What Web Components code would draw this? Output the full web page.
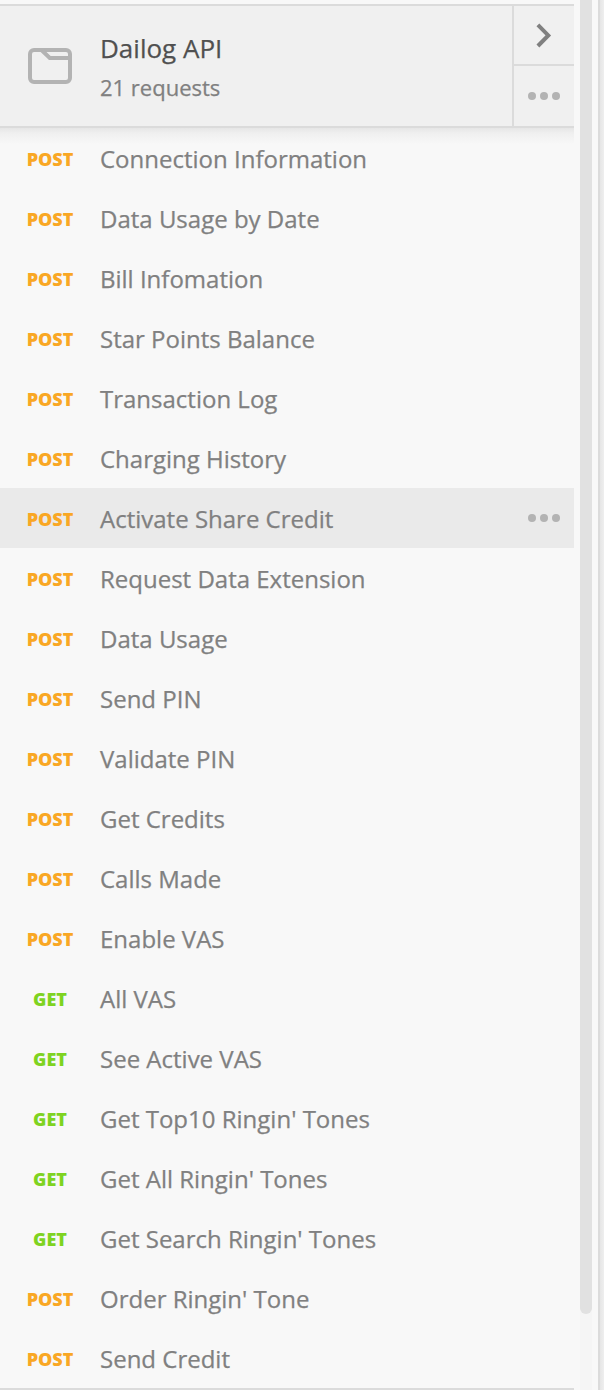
<!DOCTYPE html>
<html lang="en">
<head>
<meta charset="utf-8">
<title>Collections</title>
<style>
html, body { margin: 0; height: 100%; overflow: hidden; background: #f8f8f8; }
body { font-family: "Open Sans", "Noto Sans", sans-serif; color: #808080; }
</style>
</head>
<body>
<api-sidebar>
  <collection-header name="Dailog API" count="21 requests"></collection-header>
  <request-row method="POST">Connection Information</request-row>
  <request-row method="POST">Data Usage by Date</request-row>
  <request-row method="POST">Bill Infomation</request-row>
  <request-row method="POST">Star Points Balance</request-row>
  <request-row method="POST">Transaction Log</request-row>
  <request-row method="POST">Charging History</request-row>
  <request-row method="POST" active>Activate Share Credit</request-row>
  <request-row method="POST">Request Data Extension</request-row>
  <request-row method="POST">Data Usage</request-row>
  <request-row method="POST">Send PIN</request-row>
  <request-row method="POST">Validate PIN</request-row>
  <request-row method="POST">Get Credits</request-row>
  <request-row method="POST">Calls Made</request-row>
  <request-row method="POST">Enable VAS</request-row>
  <request-row method="GET">All VAS</request-row>
  <request-row method="GET">See Active VAS</request-row>
  <request-row method="GET">Get Top10 Ringin' Tones</request-row>
  <request-row method="GET">Get All Ringin' Tones</request-row>
  <request-row method="GET">Get Search Ringin' Tones</request-row>
  <request-row method="POST">Order Ringin' Tone</request-row>
  <request-row method="POST">Send Credit</request-row>
</api-sidebar>
<script>
const attach = (el, html) => { el.attachShadow({ mode: "open" }).innerHTML = html; };

class MoreDots extends HTMLElement {
  connectedCallback() {
    if (this.shadowRoot) return;
    attach(this, `
      <style>:host { display: block; width: 32px; height: 8px; } svg { display: block; }</style>
      <svg width="32" height="8" fill="#b3b3b3"><circle cx="4" cy="4" r="4"/><circle cx="16" cy="4" r="4"/><circle cx="28" cy="4" r="4"/></svg>`);
  }
}

class CollectionHeader extends HTMLElement {
  connectedCallback() {
    if (this.shadowRoot) return;
    attach(this, `
      <style>
        :host { display: flex; box-sizing: border-box; height: 124px; flex: none; background: #f0f0f0;
          border-top: 2px solid #dbdbdb; border-bottom: 2px solid #dbdbdb; }
        .folder { display: block; flex: none; width: 44px; height: 36px; margin: 42px 28px 0; }
        .info { flex: 1; padding-top: 24px; white-space: nowrap; -webkit-text-stroke: 0.25px; }
        .name { font-size: 26px; line-height: 36px; color: #505050; }
        .count { font-size: 22px; line-height: 30px; margin-top: 6px; }
        .actions { width: 60px; display: flex; flex-direction: column; border-left: 2px solid #dbdbdb; }
        .open, .more { display: flex; justify-content: center; box-sizing: border-box; }
        .open { height: 60px; border-bottom: 2px solid #dbdbdb; padding-top: 17px; }
        .more { height: 60px; padding-top: 26px; }
      </style>
      <svg class="folder" viewBox="0 0 44 36" fill="none" stroke="#b3b3b3" stroke-width="4">
        <rect x="2" y="2" width="40" height="32" rx="4"/>
        <path d="M14 2.5 L21.8 10 H42"/>
      </svg>
      <div class="info"><div class="name"></div><div class="count"></div></div>
      <div class="actions">
        <div class="open"><svg width="16" height="25" fill="none" stroke="#808080" stroke-width="4"><path d="M1.9 1.8 L12.3 12.4 L1.9 23"/></svg></div>
        <div class="more"><more-dots></more-dots></div>
      </div>`);
    this.shadowRoot.querySelector(".name").textContent = this.getAttribute("name");
    this.shadowRoot.querySelector(".count").textContent = this.getAttribute("count");
  }
}

class RequestRow extends HTMLElement {
  connectedCallback() {
    if (this.shadowRoot) return;
    const method = this.getAttribute("method");
    attach(this, `
      <style>
        :host { display: flex; align-items: center; flex: none; height: 60px; box-sizing: border-box; padding-right: 14px; }
        :host([active]) { background: #eaeaea; }
        .method { width: 100px; text-align: center; font-size: 18px; font-weight: 800; line-height: 24px; color: #f9a724; padding-top: 2px; }
        .method.get { color: #7ed321; }
        .label { flex: 1; font-size: 24px; line-height: 34px; padding-top: 2px; white-space: nowrap; -webkit-text-stroke: 0.25px; }
      </style>
      <span class="method ${method.toLowerCase()}">${method}</span>
      <span class="label"><slot></slot></span>
      ${this.hasAttribute("active") ? "<more-dots></more-dots>" : ""}`);
  }
}

class ScrollTrack extends HTMLElement {
  connectedCallback() {
    if (this.shadowRoot) return;
    attach(this, `
      <style>
        :host { display: block; width: 12px; background: #f5f5f5; }
        .thumb { height: 1314px; background: #e1e1e1; border-radius: 0 0 6px 6px; }
      </style>
      <div class="thumb"></div>`);
  }
}

class ApiSidebar extends HTMLElement {
  connectedCallback() {
    if (this.shadowRoot) return;
    attach(this, `
      <style>
        :host { display: flex; width: 604px; height: 1390px; background: #f8f8f8; overflow: hidden; }
        .list { display: flex; flex-direction: column; width: 574px; box-sizing: border-box; padding-top: 4px;
          border-bottom: 2px solid #dbdbdb; margin-right: 6px; }
        .rows { display: flex; flex-direction: column;
          background: linear-gradient(#e6e6e6, #efefef 5px, #f8f8f8 16px); }
        .edge { width: 6px; margin-left: 6px; background: linear-gradient(90deg, #dbdbdb 2px, #e6e6e6 2px, #efefef 6px); }
      </style>
      <div class="list"><slot name="header"></slot><div class="rows"><slot></slot></div></div>
      <scroll-track></scroll-track>
      <div class="edge"></div>`);
    this.querySelector("collection-header").slot = "header";
  }
}

customElements.define("more-dots", MoreDots);
customElements.define("collection-header", CollectionHeader);
customElements.define("request-row", RequestRow);
customElements.define("scroll-track", ScrollTrack);
customElements.define("api-sidebar", ApiSidebar);
</script>
</body>
</html>
